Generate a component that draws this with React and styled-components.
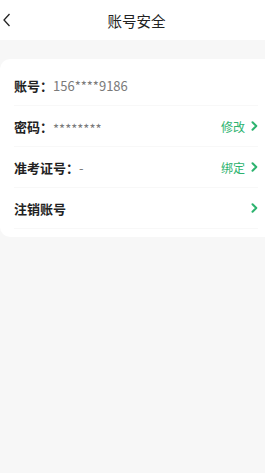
import React from "react";
import styled, { createGlobalStyle } from "styled-components";

const Global = createGlobalStyle`
  html, body { margin: 0; padding: 0; background: #f7f7f7; }
  body { font-family: "Noto Sans CJK SC", "Noto Sans", sans-serif; }
  #root { min-height: 473px; background: #f7f7f7; }
`;

const Header = styled.div`
  height: 40px;
  background: #fff;
  display: flex;
  align-items: center;
  justify-content: center;
  position: relative;
`;

const Back = styled.div`
  position: absolute;
  left: 1px;
  top: 12px;
  width: 12px;
  height: 16px;
  display: flex;
`;

const Title = styled.div`
  font-size: 14.5px;
  color: #222;
  margin-top: 1px;
  margin-left: 8px;
`;

const Card = styled.div`
  margin-top: 19px;
  background: #fff;
  border-radius: 10px 0 0 10px;
  padding: 6px 0 8px 0;
`;

const Row = styled.div`
  height: 41px;
  margin-left: 14px;
  margin-right: 7px;
  display: flex;
  align-items: center;
  border-bottom: 1px solid #f8f8f8;
  box-sizing: border-box;
`;

const Label = styled.span`
  font-size: 13px;
  font-weight: 700;
  color: #222;
`;

const Value = styled.span`
  font-size: 13px;
  color: #7a7a7a;
  padding-top: ${(p) => (p.$stars ? "4px" : "0")};
`;

const Right = styled.div`
  margin-left: auto;
  display: flex;
  align-items: center;
  gap: 6px;
`;

const Action = styled.span`
  font-size: 12px;
  color: #2db36f;
`;

const Chevron = () => (
  <svg width="7" height="10" viewBox="0 0 7 10">
    <path d="M1.5 1.2 L5.3 5 L1.5 8.8" fill="none" stroke="#2db36f" strokeWidth="2" strokeLinecap="round" strokeLinejoin="round" />
  </svg>
);

export default function App() {
  return (
    <>
      <Global />
      <Header>
        <Back>
          <svg width="12" height="16" viewBox="0 0 12 16">
            <path d="M8.5 2 L3 8 L8.5 14" fill="none" stroke="#222" strokeWidth="1.3" />
          </svg>
        </Back>
        <Title>账号安全</Title>
      </Header>
      <Card>
        <Row>
          <Label>账号：</Label>
          <Value>156****9186</Value>
        </Row>
        <Row>
          <Label>密码：</Label>
          <Value $stars>********</Value>
          <Right>
            <Action>修改</Action>
            <Chevron />
          </Right>
        </Row>
        <Row>
          <Label>准考证号：</Label>
          <Value>-</Value>
          <Right>
            <Action>绑定</Action>
            <Chevron />
          </Right>
        </Row>
        <Row>
          <Label>注销账号</Label>
          <Right>
            <Chevron />
          </Right>
        </Row>
      </Card>
    </>
  );
}
